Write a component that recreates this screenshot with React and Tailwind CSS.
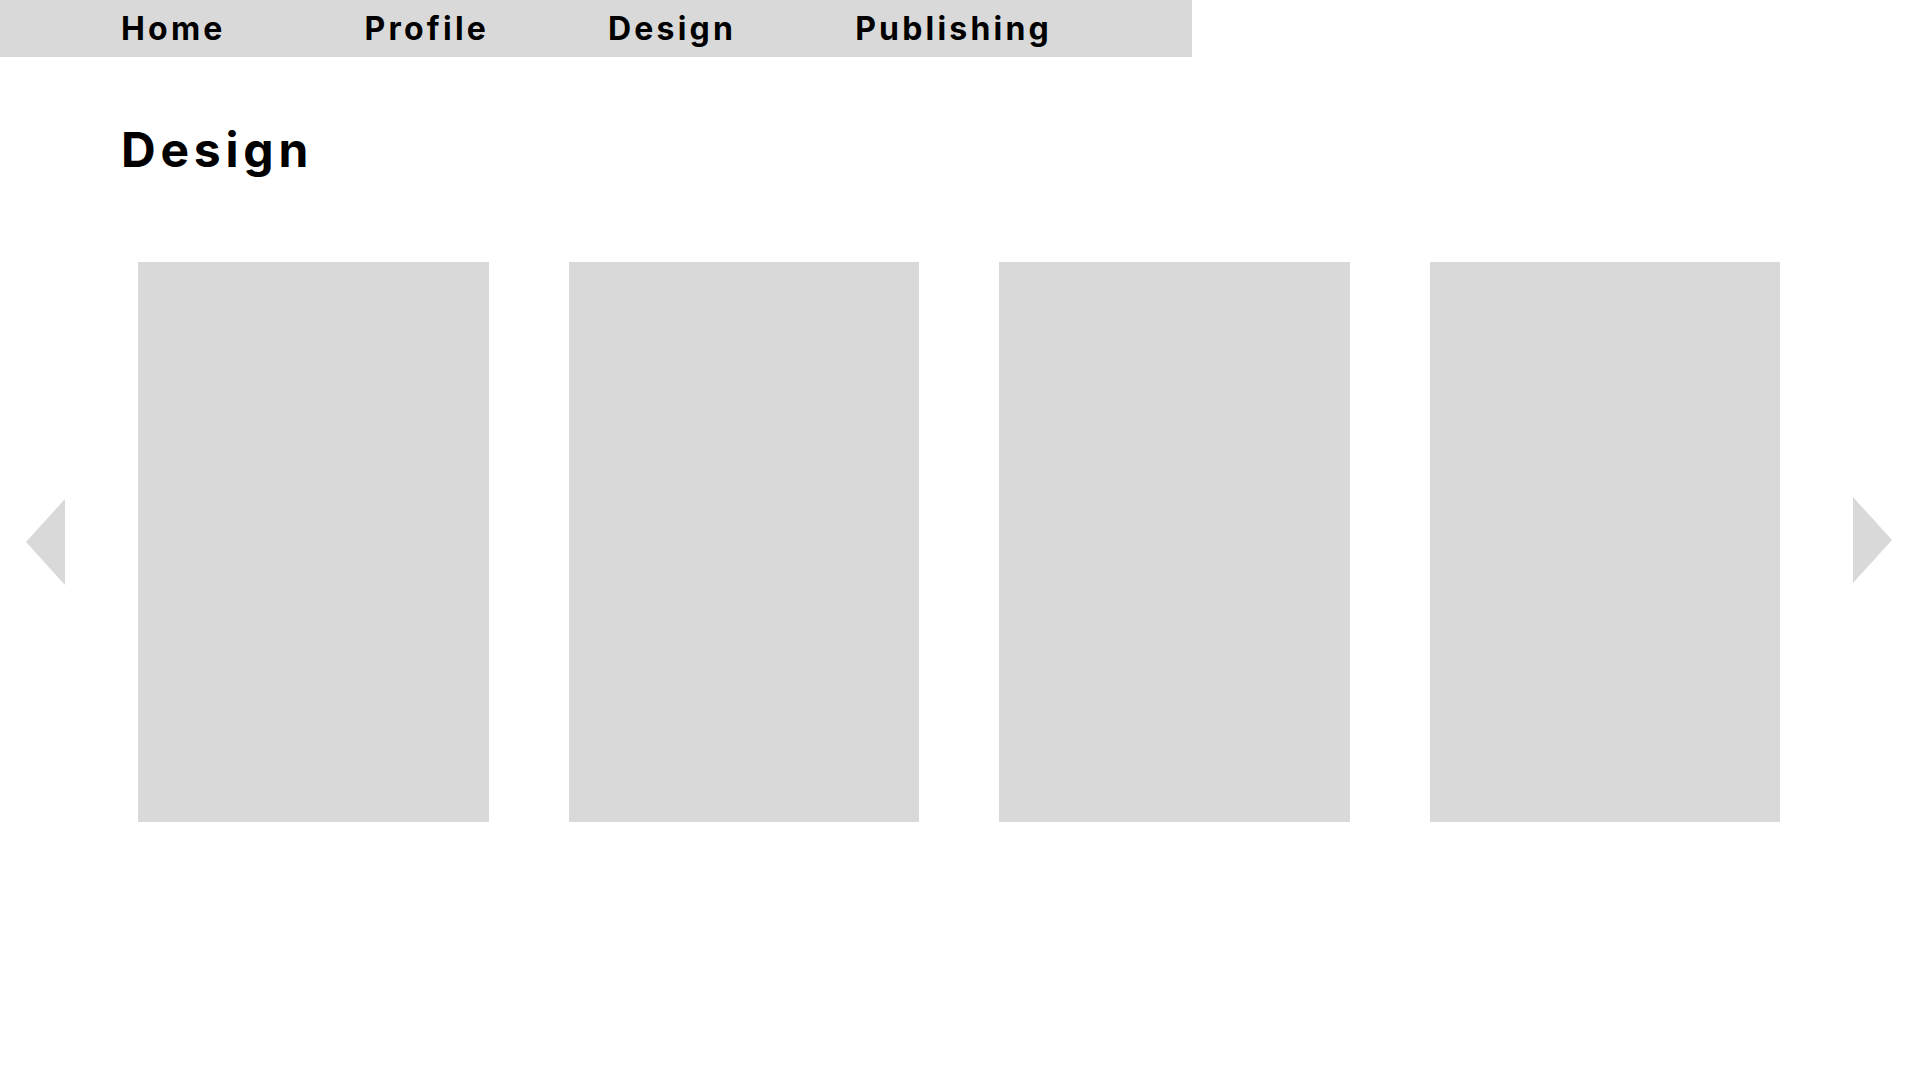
const links = ["Profile", "Design", "Publishing"];
const cards = [1, 2, 3, 4];

function Arrow({ points, label, className }) {
  return (
    <button type="button" aria-label={label} className={className}>
      <svg viewBox="0 0 39 86" className="block h-[86px] w-[39px] fill-[#d9d9d9]" aria-hidden="true">
        <polygon points={points} />
      </svg>
    </button>
  );
}

export default function App() {
  return (
    <div className="min-h-screen bg-white font-['Inter',sans-serif] font-bold text-black">
      <nav className="flex h-[57px] w-fit items-center gap-[119px] bg-[#d9d9d9] pr-[140px] pl-[121px] text-[32px] leading-[39px] tracking-widest">
        <a href="#home" className="mr-5">Home</a>
        {links.map((name) => (
          <a key={name} href={"#" + name.toLowerCase()}>
            {name}
          </a>
        ))}
      </nav>
      <main>
        <h1 className="pt-[64px] pl-[121px] text-[48px] leading-[58px] tracking-widest">Design</h1>
        <section aria-label="Design works" className="mt-[83px] flex items-center pr-7 pl-[26px]">
          <Arrow label="Previous" points="39,0 0,43 39,86" className="shrink-0" />
          <ul className="mr-[73px] ml-[73px] grid flex-1 grid-cols-4 gap-20">
            {cards.map((card) => (
              <li key={card} className="h-[560px] bg-[#d9d9d9]" />
            ))}
          </ul>
          <Arrow label="Next" points="0,0 39,43 0,86" className="mb-1 shrink-0" />
        </section>
      </main>
    </div>
  );
}
